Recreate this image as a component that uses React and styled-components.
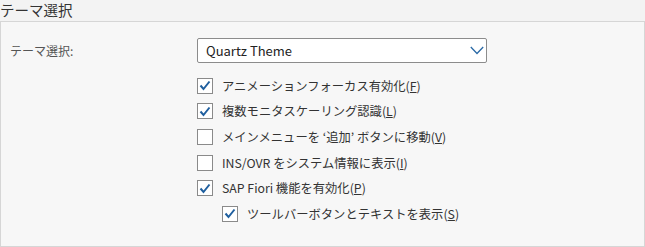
import React from 'react';
import styled, { createGlobalStyle } from 'styled-components';

const pageBg = '#f3f3f3';
const panelBg = '#f7f7f7';
const checkBlue = '#1f5f9f';
const fontStack = '"Noto Sans CJK JP", "Noto Sans", sans-serif';

const GlobalStyle = createGlobalStyle`
  html, body {
    margin: 0;
    padding: 0;
    background: ${pageBg};
    font-family: ${fontStack};
  }
  * {
    box-sizing: border-box;
  }
`;

const Page = styled.div`
  width: 645px;
  height: 247px;
  display: flex;
  flex-direction: column;
`;

const Title = styled.h2`
  margin: 0;
  height: 21px;
  font-size: 14.5px;
  font-weight: 400;
  line-height: 20px;
  color: #333;
`;

const Panel = styled.section`
  width: 645px;
  height: 226px;
  background: ${panelBg};
  border: 1px solid #d6d6d6;
  padding: 16px 0 0 9px;
`;

const FieldRow = styled.div`
  display: flex;
  align-items: center;
  height: 25px;
`;

const Label = styled.label`
  width: 187px;
  font-size: 12px;
  color: #555;
`;

const Select = styled.div`
  width: 290px;
  height: 25px;
  border: 1px solid #8c8c8c;
  border-radius: 2px;
  background: #fff;
  display: flex;
  align-items: center;
  justify-content: space-between;
  padding: 0 2px 0 8px;
  font-size: 13px;
  color: #222;
`;

const Options = styled.div`
  margin-top: 10px;
  padding-left: 187px;
  display: flex;
  flex-direction: column;
`;

const OptionRow = styled.div`
  display: flex;
  align-items: center;
  height: 25.6px;
  gap: 9px;
  padding-left: ${p => (p.$indent ? 25 : 0)}px;
  font-size: 12.3px;
  color: #333;
`;

const Box = styled.span`
  width: 16px;
  height: 16px;
  border: 1px solid #8a8a8a;
  background: #fff;
  display: flex;
  align-items: center;
  justify-content: center;
  flex-shrink: 0;
`;

const Key = styled.span`
  text-decoration: underline;
`;

const Chevron = () => (
  <svg width="14" height="9" viewBox="0 0 14 9">
    <path d="M0.8 1 L7 7.5 L13.2 1" fill="none" stroke="#2b6aa6" strokeWidth="1.3" />
  </svg>
);

const Check = () => (
  <svg width="12" height="11" viewBox="0 0 12 11">
    <path d="M1.5 5.5 L4.5 9 L10.5 1.5" fill="none" stroke={checkBlue} strokeWidth="2" />
  </svg>
);

const options = [
  { text: 'アニメーションフォーカス有効化', key: 'F', checked: true },
  { text: '複数モニタスケーリング認識', key: 'L', checked: true },
  { text: 'メインメニューを ‘追加’ ボタンに移動', key: 'V', checked: false },
  { text: 'INS/OVR をシステム情報に表示', key: 'I', checked: false },
  { text: 'SAP Fiori 機能を有効化', key: 'P', checked: true },
  { text: 'ツールバーボタンとテキストを表示', key: 'S', checked: true, indent: true },
];

export default function App() {
  return (
    <Page>
      <GlobalStyle />
      <Title>テーマ選択</Title>
      <Panel>
        <FieldRow>
          <Label>テーマ選択:</Label>
          <Select>
            <span>Quartz Theme</span>
            <Chevron />
          </Select>
        </FieldRow>
        <Options>
          {options.map(o => (
            <OptionRow key={o.key} $indent={o.indent}>
              <Box>{o.checked && <Check />}</Box>
              <span>
                {o.text}(<Key>{o.key}</Key>)
              </span>
            </OptionRow>
          ))}
        </Options>
      </Panel>
    </Page>
  );
}
